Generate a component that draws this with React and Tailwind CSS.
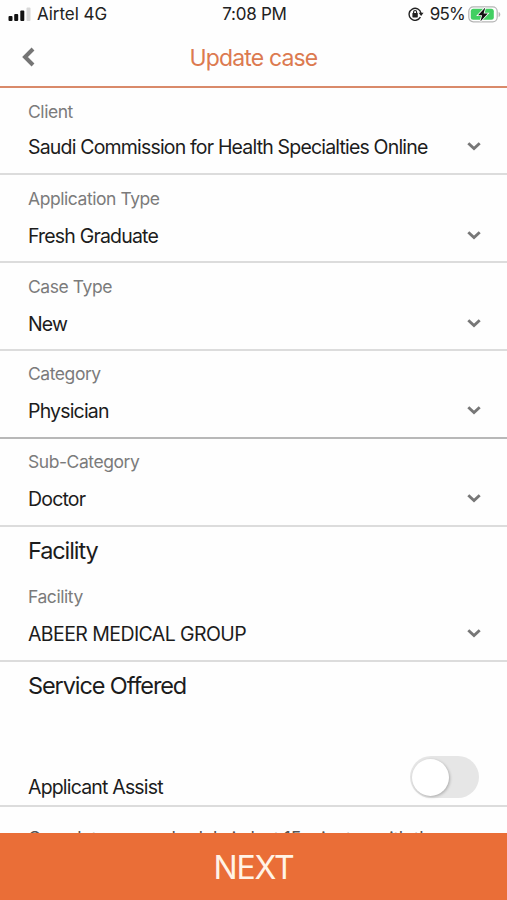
import clsx from "clsx"

const fields = [
  { label: "Client", value: "Saudi Commission for Health Specialties Online", box: "h-[87px] pt-[13px]", gap: "mt-3", line: "border-[#dcdcdc]" },
  { label: "Application Type", value: "Fresh Graduate", box: "h-[88px] pt-[13px]", gap: "mt-3.5", line: "border-[#dcdcdc]" },
  { label: "Case Type", value: "New", box: "h-[88px] pt-[13px]", gap: "mt-3.5", line: "border-[#dcdcdc]" },
  { label: "Category", value: "Physician", box: "h-[88px] pt-3", gap: "mt-3.5", line: "border-[#b8b8b8]" },
  { label: "Sub-Category", value: "Doctor", box: "h-[88px] pt-3", gap: "mt-3.5", line: "border-[#dcdcdc]" },
]

const facility = { label: "Facility", value: "ABEER MEDICAL GROUP", box: "h-[88px] pt-3", gap: "mt-3.5", line: "border-[#dcdcdc]", spacing: "tracking-[-0.58px]" }

const SignalIcon = () => (
  <svg width="23" height="14" viewBox="0 0 23 14" className="shrink-0">
    <rect x="0.5" y="9" width="4" height="5" rx="1" fill="#111" />
    <rect x="6.2" y="7" width="4" height="7" rx="1" fill="#111" />
    <rect x="12.3" y="3.5" width="4" height="10.5" rx="1" fill="#111" />
    <rect x="18.5" y="0.5" width="4" height="13.5" rx="1" fill="#d8d8d8" />
  </svg>
)

const RotationLockIcon = () => (
  <svg width="16" height="14" viewBox="0 0 16 14" fill="none" className="shrink-0">
    <path d="M12.4 10.2A6 6 0 1 1 13 6.2" stroke="#222" strokeWidth="1.4" />
    <path d="M10.6 5.8H15.6L13.1 9.1Z" fill="#222" />
    <rect x="4.4" y="6" width="5.4" height="4.4" rx="0.6" fill="#222" />
    <path d="M5.6 6.4V5a1.5 1.5 0 0 1 3 0V6.4" stroke="#222" strokeWidth="1.2" />
  </svg>
)

const BatteryIcon = () => (
  <svg width="33" height="17" viewBox="0 0 33 17" fill="none" className="shrink-0">
    <rect x="0.8" y="0.8" width="28.4" height="15" rx="4.5" stroke="#b5b5b5" strokeWidth="1.2" />
    <rect x="2.8" y="2.8" width="23" height="11" rx="2.5" fill="#42cf62" />
    <path d="M30.6 6v5c1-.3 1.7-1.3 1.7-2.5S31.6 6.3 30.6 6Z" fill="#b5b5b5" />
    <path d="M17.3 1.5 10 9.3h4.1l-1.7 6.2 7.4-8h-4.2Z" fill="#111" stroke="#fff" strokeWidth="1.6" paintOrder="stroke" />
  </svg>
)

const Chevron = () => (
  <svg width="14" height="10" viewBox="0 0 14 10" fill="none" className="shrink-0 mb-0.5">
    <path d="M1.3 2.2 7 7.5l5.7-5.3" stroke="#777" strokeWidth="2.9" />
  </svg>
)

// Label with the selected value and a dropdown arrow
const SelectField = ({ label, value, box, gap, line, spacing = "tracking-[-0.82px]" }) => (
  <div className={clsx("border-b-2 pl-7 pr-[26px]", box, line)}>
    <div className="text-[17.5px] leading-[22px] tracking-[-0.44px] text-[#7b7b7b] whitespace-nowrap">{label}</div>
    <div className={clsx("flex items-center justify-between", gap)}>
      <span className={clsx("text-[19.5px] leading-6 text-[#1c1c1c] whitespace-nowrap", spacing)}>{value}</span>
      <Chevron />
    </div>
  </div>
)

const App = () => {
  return (
    <div className="w-full h-[900px] flex flex-col overflow-hidden bg-[#fefefe] font-['Inter',sans-serif]">
      {/* Status bar */}
      <div className="grid grid-cols-3 items-center h-7 shrink-0 pl-2 pr-1.5 text-[17px] leading-7 text-[#222]">
        <div className="flex items-center gap-1.5">
          <SignalIcon />
          <span className="whitespace-nowrap tracking-[-0.05px]">Airtel 4G</span>
        </div>
        <span className="text-center whitespace-nowrap tracking-[-0.25px]">7:08 PM</span>
        <div className="flex items-center justify-end">
          <RotationLockIcon />
          <span className="ml-1.5 mr-[3px] tracking-[-0.8px]">95%</span>
          <BatteryIcon />
        </div>
      </div>

      <header className="grid grid-cols-[60px_1fr_60px] items-center h-[60px] shrink-0 border-b-2 border-[#d98a6a]">
        <button className="pl-[22px]" aria-label="Back">
          <svg width="13" height="20" viewBox="0 0 13 20" fill="none">
            <path d="M11 2 3 10l8 8" stroke="#757575" strokeWidth="4" />
          </svg>
        </button>
        <h1 className="pt-px text-center text-[23px] leading-7 tracking-[-0.85px] text-[#dc7a50]">Update case</h1>
      </header>

      <main className="flex-1 min-h-0 overflow-hidden">
        {fields.map((field) => (
          <SelectField key={field.label} {...field} />
        ))}

        <h2 className="h-[47px] px-7 pt-[9px] text-[23.5px] leading-[30px] tracking-[-1.1px] text-[#1c1c1c]">Facility</h2>
        <SelectField {...facility} />

        <h2 className="h-[92px] px-7 pt-[9px] text-[23.5px] leading-[30px] tracking-[-1.1px] text-[#1c1c1c]">Service Offered</h2>
        <div className="flex justify-between h-[53px] px-7 border-b-2 border-[#dcdcdc]">
          <span className="pt-[21px] text-[19.5px] leading-6 tracking-[-0.82px] text-[#1c1c1c]">Applicant Assist</span>
          <button className="mt-0.5 w-[69px] h-[42px] rounded-full bg-[#e6e6e6] p-[2px]" aria-label="Applicant Assist">
            <span className="block w-[37px] h-[37px] rounded-full bg-white shadow-[1px_1px_3px_rgba(0,0,0,0.25)]" />
          </button>
        </div>
        <p className="px-7 pt-[21px] text-[18px] leading-[22px] tracking-[-0.38px] text-[#555] whitespace-nowrap">
          Complete your schedule in last 15 minutes with the
        </p>
      </main>

      <button className="h-[67px] shrink-0 pt-0.5 bg-[#ea6e37] text-[32px] tracking-[-1.2px] text-[#fff3e6]">NEXT</button>
    </div>
  )
}

export default App
